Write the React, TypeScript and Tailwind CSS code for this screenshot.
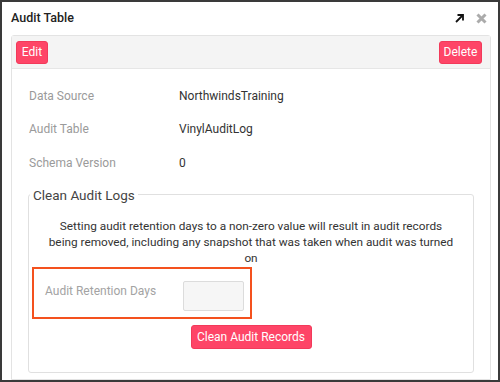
import React from "react";

const rows = [
  { label: "Data Source", value: "NorthwindsTraining" },
  { label: "Audit Table", value: "VinylAuditLog" },
  { label: "Schema Version", value: "0" },
];

function RedButton({ children, className = "" }: { children: React.ReactNode; className?: string }) {
  return (
    <button
      className={
        "flex items-center justify-center rounded-[3px] border border-[#f23a5a] bg-[#fe4567] text-[12px] leading-none text-white " +
        className
      }
    >
      {children}
    </button>
  );
}

export default function App() {
  return (
    <div
      className="flex h-[382px] w-[500px] flex-col overflow-hidden border-2 border-[#3a3a3a] bg-white text-[#333]"
      style={{ fontFamily: "Roboto, 'Liberation Sans', sans-serif" }}
    >
      <div className="flex h-[33px] shrink-0 items-center justify-between pl-[9px] pr-[11px]">
        <h1 className="text-[12.5px] font-medium text-[#222]">Audit Table</h1>
        <div className="flex items-center gap-[12px]">
          <svg width="9" height="9" viewBox="0 0 9 9" aria-hidden="true">
            <path d="M1 8L7.5 1.5" stroke="#111" strokeWidth="1.8" fill="none" />
            <path d="M2.5 1H8V6.5" stroke="#111" strokeWidth="1.8" fill="none" />
          </svg>
          <svg width="11" height="11" viewBox="0 0 11 11" aria-hidden="true">
            <path d="M1.5 1.5L9.5 9.5M9.5 1.5L1.5 9.5" stroke="#ababab" strokeWidth="3" fill="none" />
          </svg>
        </div>
      </div>

      <div className="ml-[9px] mr-[7px] flex flex-1 flex-col rounded-t-[3px] border border-[#e3e3e3]">
        <div className="flex h-[33px] shrink-0 items-center justify-between border-b border-[#e6e6e6] bg-[#f4f4f4] pl-[4px] pr-[8px]">
          <RedButton className="h-[23px] w-[32px]">Edit</RedButton>
          <RedButton className="h-[23px] w-[43px]">Delete</RedButton>
        </div>

        <div className="pl-[17px] pt-[10px] text-[12px]">
          {rows.map((r) => (
            <div key={r.label} className="flex h-[33.5px] items-center">
              <span className="w-[150px] text-[#9a9a9a]">{r.label}</span>
              <span className="text-[#333]">{r.value}</span>
            </div>
          ))}
        </div>

        <fieldset className="mx-[16px] mt-[7px] rounded-[3px] border border-[#e0e0e0] pb-[23px]">
          <legend className="ml-[1px] px-[3px] text-[13.5px] leading-[16px] text-[#444]">Clean Audit Logs</legend>
          <p className="mt-[15px] px-[17px] text-center text-[11.8px] leading-[16px] text-[#333]">
            Setting audit retention days to a non-zero value will result in audit records being removed, including any
            snapshot that was taken when audit was turned on
          </p>
          <div className="ml-[3px] mt-[1px] flex h-[52px] w-[220px] items-start border-2 border-[#f4511e] pl-[11px] pt-[12px]">
            <span className="w-[138px] pt-[1px] text-[12px] text-[#a3a3a3]">Audit Retention Days</span>
            <div className="h-[30px] w-[61px] rounded-[2px] border border-[#dcdcdc] bg-[#f6f6f6]" />
          </div>
          <div className="mt-[6px] flex justify-center">
            <RedButton className="h-[24px] w-[121px]">Clean Audit Records</RedButton>
          </div>
        </fieldset>
      </div>
    </div>
  );
}
